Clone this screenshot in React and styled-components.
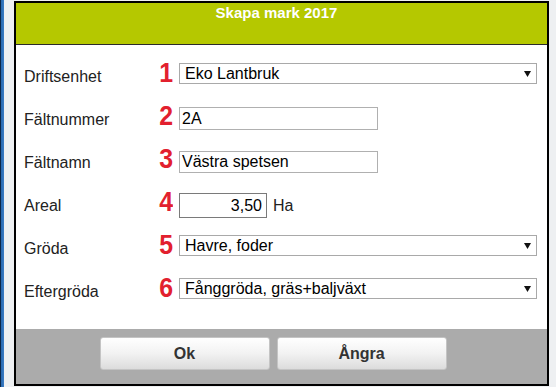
import React from "react";
import styled, { createGlobalStyle } from "styled-components";

const Global = createGlobalStyle`
  html, body { margin: 0; padding: 0; }
  body {
    background: #eef0f2;
    font-family: "Liberation Sans", Arial, sans-serif;
    width: 556px;
    height: 387px;
    overflow: hidden;
  }
`;

const Page = styled.div`
  display: flex;
  align-items: flex-start;
  height: 387px;
`;

const WindowEdge = styled.div`
  width: 4px;
  align-self: stretch;
  background: linear-gradient(to right, #0c2748 0, #0c2748 1.5px, #2b6cb3 1.5px, #3b7cc4 4px);
`;

const Dialog = styled.div`
  margin: 1px 0 0 10px;
  width: 531px;
  border: 2px solid #000;
  background: #fff;
  display: flex;
  flex-direction: column;
`;

const Header = styled.div`
  height: 40px;
  background: #b5c800;
  border-bottom: 1px solid #2a2a2a;
  padding: 1px 10px 0 0;
  box-sizing: content-box;
  text-align: center;
  color: #fff;
  font-weight: bold;
  font-size: 15px;
  line-height: 17px;
`;

const Body = styled.div`
  padding: 7px 0 19px 8px;
  display: flex;
  flex-direction: column;
`;

const Row = styled.div`
  height: 43px;
  display: flex;
  align-items: center;
`;

const Label = styled.div`
  width: 125px;
  margin-top: 7px;
  font-size: 16px;
  line-height: 18px;
  color: #222;
`;

const Num = styled.div`
  width: 24px;
  margin-right: 6px;
  text-align: right;
  font-size: 27px;
  line-height: 27px;
  font-weight: bold;
  color: #e2202e;
  transform: scaleX(0.92);
  transform-origin: right center;
`;

const SelectBox = styled.div`
  width: 358px;
  height: 21px;
  box-sizing: border-box;
  border: 1px solid #a9a9a9;
  background: #fff;
  display: flex;
  align-items: center;
  justify-content: space-between;
  padding: 0 5px 0 5px;
  font-size: 16px;
  color: #000;
`;

const Arrow = styled.svg`
  width: 7px;
  height: 6px;
  flex: none;
`;

const TextInput = styled.input`
  width: ${(p) => p.$w}px;
  height: ${(p) => p.$h}px;
  margin-top: ${(p) => p.$shift}px;
  box-sizing: border-box;
  border: 1px solid ${(p) => p.$dark ? "#7a7a7a" : "#b0b0b0"};
  padding: 0 ${(p) => p.$right ? 4 : 2}px 0 2px;
  text-align: ${(p) => p.$right ? "right" : "left"};
  font-family: "Liberation Sans", Arial, sans-serif;
  font-size: 16px;
  color: #000;
  background: #fff;
  outline: none;
`;

const Unit = styled.span`
  margin-left: 6px;
  margin-top: 6px;
  font-size: 16px;
  color: #222;
`;

const Footer = styled.div`
  height: 55px;
  background: #ababab;
  display: flex;
  justify-content: center;
  align-items: flex-start;
  gap: 7px;
  padding: 8px 17px 0 0;
  box-sizing: border-box;
`;

const Button = styled.button`
  width: 170px;
  height: 33px;
  border: 1px solid #c4c4c4;
  border-radius: 3px;
  background: linear-gradient(to bottom, #ffffff 0%, #f2f2f2 50%, #dcdcdc 100%);
  font-family: "Liberation Sans", Arial, sans-serif;
  font-weight: bold;
  font-size: 16px;
  color: #333;
  padding: 0;
`;

const Select = ({ children }) => (
  <SelectBox>
    <span>{children}</span>
    <Arrow viewBox="0 0 7 6">
      <path d="M0 0 H7 L3.5 6 Z" fill="#111" />
    </Arrow>
  </SelectBox>
);

export default function App() {
  return (
    <>
      <Global />
      <Page>
        <WindowEdge />
        <Dialog>
          <Header>Skapa mark 2017</Header>
          <Body>
            <Row>
              <Label>Driftsenhet</Label>
              <Num>1</Num>
              <Select>Eko Lantbruk</Select>
            </Row>
            <Row>
              <Label>Fältnummer</Label>
              <Num>2</Num>
              <TextInput $w={199} $h={23} $shift={4} defaultValue="2A" />
            </Row>
            <Row>
              <Label>Fältnamn</Label>
              <Num>3</Num>
              <TextInput $w={199} $h={22} $shift={5} defaultValue="Västra spetsen" />
            </Row>
            <Row>
              <Label>Areal</Label>
              <Num>4</Num>
              <TextInput $w={88} $h={25} $shift={6} $right $dark defaultValue="3,50" />
              <Unit>Ha</Unit>
            </Row>
            <Row>
              <Label>Gröda</Label>
              <Num>5</Num>
              <Select>Havre, foder</Select>
            </Row>
            <Row>
              <Label>Eftergröda</Label>
              <Num>6</Num>
              <Select>Fånggröda, gräs+baljväxt</Select>
            </Row>
          </Body>
          <Footer>
            <Button>Ok</Button>
            <Button>Ångra</Button>
          </Footer>
        </Dialog>
      </Page>
    </>
  );
}
